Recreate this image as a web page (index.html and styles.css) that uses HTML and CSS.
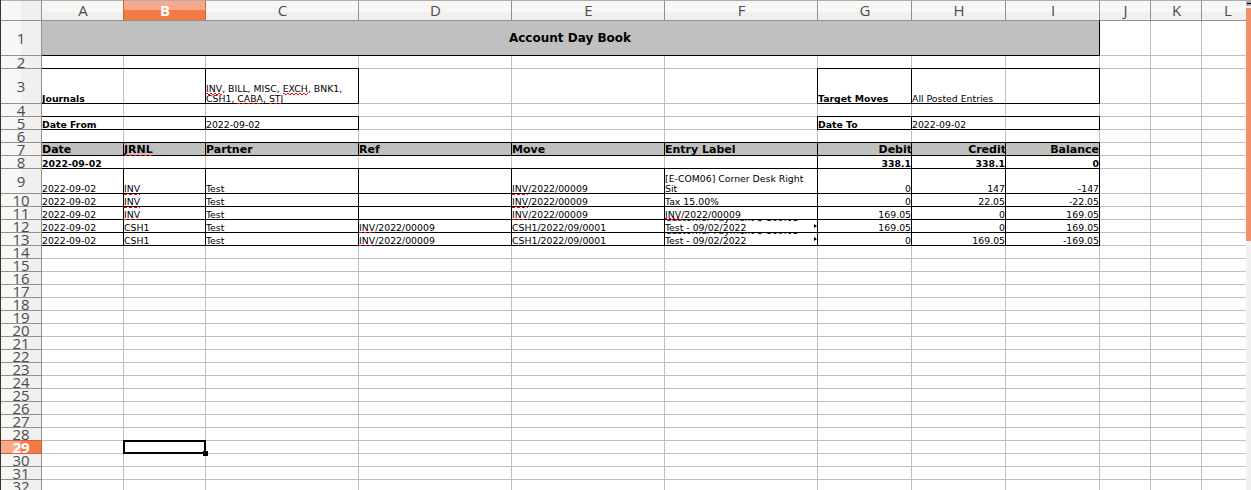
FILE: index.html
```
<!DOCTYPE html>
<html lang="en">
<head>
<meta charset="utf-8">
<title>Account Day Book</title>
<link rel="stylesheet" href="styles.css">
</head>
<body>
<div class="app">
<main class="sheet">
<div class="row heads"><div class="num corner"></div><div class="col">A</div><div class="col active">B</div><div class="col">C</div><div class="col">D</div><div class="col">E</div><div class="col">F</div><div class="col">G</div><div class="col">H</div><div class="col">I</div><div class="col">J</div><div class="col">K</div><div class="col last">L</div></div>
<div class="row tall"><div class="num">1</div><div class="cell title s9">Account Day Book</div></div>
<div class="row"><div class="num">2</div></div>
<div class="row tall"><div class="num">3</div><div class="cell bold s2">Journals</div><div class="cell"><p><span class="sp up">INV</span>, BILL, MISC, <span class="sp up">EXCH</span>, BNK1,<br>CSH1, <span class="sp low">CABA</span>, <span class="sp low">STJ</span></p></div><div class="cell bold g">Target Moves</div><div class="cell s2">All Posted Entries</div></div>
<div class="row"><div class="num">4</div></div>
<div class="row"><div class="num">5</div><div class="cell bold s2">Date From</div><div class="cell">2022-09-02</div><div class="cell bold g">Date To</div><div class="cell s2">2022-09-02</div></div>
<div class="row"><div class="num">6</div></div>
<div class="row header"><div class="num">7</div><div class="cell">Date</div><div class="cell"><span class="sp on">JRNL</span></div><div class="cell">Partner</div><div class="cell">Ref</div><div class="cell">Move</div><div class="cell">Entry Label</div><div class="cell r">Debit</div><div class="cell r">Credit</div><div class="cell r">Balance</div></div>
<div class="row total"><div class="num">8</div><div class="cell bold s6">2022-09-02</div><div class="cell bold r">338.1</div><div class="cell bold r">338.1</div><div class="cell bold r">0</div></div>
<div class="row mid"><div class="num">9</div><div class="cell">2022-09-02</div><div class="cell"><span class="sp">INV</span></div><div class="cell">Test</div><div class="cell"></div><div class="cell"><span class="sp">INV</span>/2022/00009</div><div class="cell"><p>[E-COM06] Corner Desk Right<br>Sit</p></div><div class="cell r">0</div><div class="cell r">147</div><div class="cell r">-147</div></div>
<div class="row"><div class="num">10</div><div class="cell">2022-09-02</div><div class="cell"><span class="sp">INV</span></div><div class="cell">Test</div><div class="cell"></div><div class="cell"><span class="sp">INV</span>/2022/00009</div><div class="cell">Tax 15.00%</div><div class="cell r">0</div><div class="cell r">22.05</div><div class="cell r">-22.05</div></div>
<div class="row"><div class="num">11</div><div class="cell">2022-09-02</div><div class="cell"><span class="sp on">INV</span></div><div class="cell">Test</div><div class="cell"></div><div class="cell"><span class="sp on">INV</span>/2022/00009</div><div class="cell"><span class="sp up">INV</span>/2022/00009</div><div class="cell r">169.05</div><div class="cell r">0</div><div class="cell r">169.05</div></div>
<div class="row"><div class="num">12</div><div class="cell">2022-09-02</div><div class="cell">CSH1</div><div class="cell">Test</div><div class="cell"><span class="sp on">INV</span>/2022/00009</div><div class="cell">CSH1/2022/09/0001</div><div class="cell clip"><p>Customer Payment $ 169.05<br>Test - 09/02/2022</p></div><div class="cell r">169.05</div><div class="cell r">0</div><div class="cell r">169.05</div></div>
<div class="row"><div class="num">13</div><div class="cell">2022-09-02</div><div class="cell">CSH1</div><div class="cell">Test</div><div class="cell"><span class="sp on">INV</span>/2022/00009</div><div class="cell">CSH1/2022/09/0001</div><div class="cell clip"><p>Customer Payment $ 169.05<br>Test - 09/02/2022</p></div><div class="cell r">0</div><div class="cell r">169.05</div><div class="cell r">-169.05</div></div>
<div class="row"><div class="num">14</div></div>
<div class="row"><div class="num">15</div></div>
<div class="row"><div class="num">16</div></div>
<div class="row"><div class="num">17</div></div>
<div class="row"><div class="num">18</div></div>
<div class="row"><div class="num">19</div></div>
<div class="row"><div class="num">20</div></div>
<div class="row"><div class="num">21</div></div>
<div class="row"><div class="num">22</div></div>
<div class="row"><div class="num">23</div></div>
<div class="row"><div class="num">24</div></div>
<div class="row"><div class="num">25</div></div>
<div class="row"><div class="num">26</div></div>
<div class="row"><div class="num">27</div></div>
<div class="row"><div class="num">28</div></div>
<div class="row"><div class="num active">29</div><div class="cursor"></div></div>
<div class="row"><div class="num">30</div></div>
<div class="row"><div class="num">31</div></div>
<div class="row"><div class="num">32</div></div>
</main>
<aside class="scroll"><div class="split"></div><div class="thumb"></div></aside>
</div>
</body>
</html>
```
FILE: styles.css
```
* { box-sizing: border-box; }
body { margin: 0; background: #fff; font-family: "DejaVu Sans", sans-serif; font-size: 9.33px; color: #000; }
.app { display: flex; width: 1251px; height: 490px; overflow: hidden; border-left: 1px solid #3f2f35; }
.sheet {
  --line: #c0c0c0;
  width: 1245px;
  flex: none;
  background:
    linear-gradient(var(--line), var(--line)) 122px 0 / 1px 100% no-repeat,
    linear-gradient(var(--line), var(--line)) 204px 0 / 1px 100% no-repeat,
    linear-gradient(var(--line), var(--line)) 357px 0 / 1px 100% no-repeat,
    linear-gradient(var(--line), var(--line)) 510px 0 / 1px 100% no-repeat,
    linear-gradient(var(--line), var(--line)) 663px 0 / 1px 100% no-repeat,
    linear-gradient(var(--line), var(--line)) 816px 0 / 1px 100% no-repeat,
    linear-gradient(var(--line), var(--line)) 910px 0 / 1px 100% no-repeat,
    linear-gradient(var(--line), var(--line)) 1004px 0 / 1px 100% no-repeat,
    linear-gradient(var(--line), var(--line)) 1098px 0 / 1px 100% no-repeat,
    linear-gradient(var(--line), var(--line)) 1149px 0 / 1px 100% no-repeat,
    linear-gradient(var(--line), var(--line)) 1200px 0 / 1px 100% no-repeat;
}
.row {
  display: grid;
  grid-template-columns: 41px 82px 82px 153px 153px 153px 153px 94px 94px 94px 51px 51px 44px;
  grid-template-rows: 100%;
  height: 13px;
  background: linear-gradient(#c0c0c0, #c0c0c0) 0 100% / 100% 1px no-repeat;
}
.row.heads { height: 21px; }
.row.tall { height: 35px; }
.row.mid { height: 25px; }

.num, .col {
  display: flex;
  align-items: center;
  justify-content: center;
  font-family: "Open Sans", sans-serif;
  font-size: 15px;
  line-height: 20px;
  color: #4c4c4c;
  overflow: hidden;
}
.num {
  position: relative;
  z-index: 2;
  background: linear-gradient(90deg, #f7f7f5 20px, #f1f0ef 20px);
  border-right: 1px solid #92928c;
  border-bottom: 1px solid #92928c;
}
.col {
  background: linear-gradient(#f7f7f6 11px, #f1f0ef 11px);
  border-top: 1px solid #b0aeac;
  border-right: 1px solid #92928c;
  border-bottom: 1px solid #92928c;
  padding: 0 0 2px 1px;
}
.col.last { border-right: 0; padding-left: 8px; }
.corner { border-top: 1px solid #b0aeac; }
.col.active, .num.active { color: #fff; font-weight: bold; }
.col.active { background: linear-gradient(#f8a98b 9px, #f17a49 9px); border-right-color: #d3623a; border-bottom-color: #d3623a; box-shadow: -1px 0 #d3623a; }
.num.active { background: linear-gradient(90deg, #f8a98b 20px, #f17a49 20px); border-color: #d3623a; box-shadow: 0 -1px #d3623a; }

.cell {
  display: flex;
  align-items: flex-end;
  margin: -1px 0 0 -1px;
  border: 1px solid #000;
  line-height: 8px;
  white-space: nowrap;
}
.cell p { margin: 0 0 -1px; line-height: 10px; }
.s2 { grid-column-end: span 2; }
.s6 { grid-column-end: span 6; }
.s9 { grid-column-end: span 9; }
.g { grid-column-start: 8; }
.r { justify-content: flex-end; }
.bold { font-weight: bold; }
.cell.title { align-items: center; justify-content: center; padding-right: 1px; background: #c0c0c0; border-top-color: #92928c; font-size: 12px; line-height: 10px; }
.title { font-weight: bold; }
.header .cell { background: #c0c0c0; font-size: 11px; font-weight: bold; line-height: 11px; }
.header .r { margin-right: -1px; border-right-color: transparent; background-clip: padding-box; }
.header .r:last-child { margin-right: 0; border-right-color: #000; }
.clip { position: relative; overflow: clip; overflow-clip-margin: 1px; }
.clip::after {
  content: "";
  position: absolute;
  right: 0;
  top: 4px;
  border: 2px solid transparent;
  border-left: 3px solid #000;
  border-right: 0;
}

.sp { position: relative; }
.sp::after {
  content: "";
  position: absolute;
  z-index: 1;
  left: 0;
  right: 0;
  bottom: -2px;
  height: 1px;
  background: repeating-linear-gradient(90deg, #f00 0 3px, transparent 3px 5px);
}
.sp.on::after { bottom: -1px; }
.sp.low::after { bottom: 0; }
.sp.up::after {
  bottom: -1px;
  height: 2px;
  background:
    repeating-linear-gradient(90deg, #f00 0 2px, transparent 2px 4px) 0 0 / 100% 1px no-repeat,
    repeating-linear-gradient(90deg, transparent 0 2px, #f00 2px 4px) 0 1px / 100% 1px no-repeat;
}

.cursor { position: relative; z-index: 3; grid-column: 3; margin: -1px 0 0 -1px; border: 2px solid #000; }
.cursor::after { content: ""; position: absolute; right: -4px; bottom: -4px; width: 5px; height: 5px; background: #000; }

.scroll { width: 5px; flex: none; background: #f1f0ef; }
.split { height: 6px; background: linear-gradient(#000, #000) 1px 3px / 4px 1px no-repeat, #b0aeac; }
.thumb { height: 233px; margin-top: 2px; background: #f3906a; }
```
